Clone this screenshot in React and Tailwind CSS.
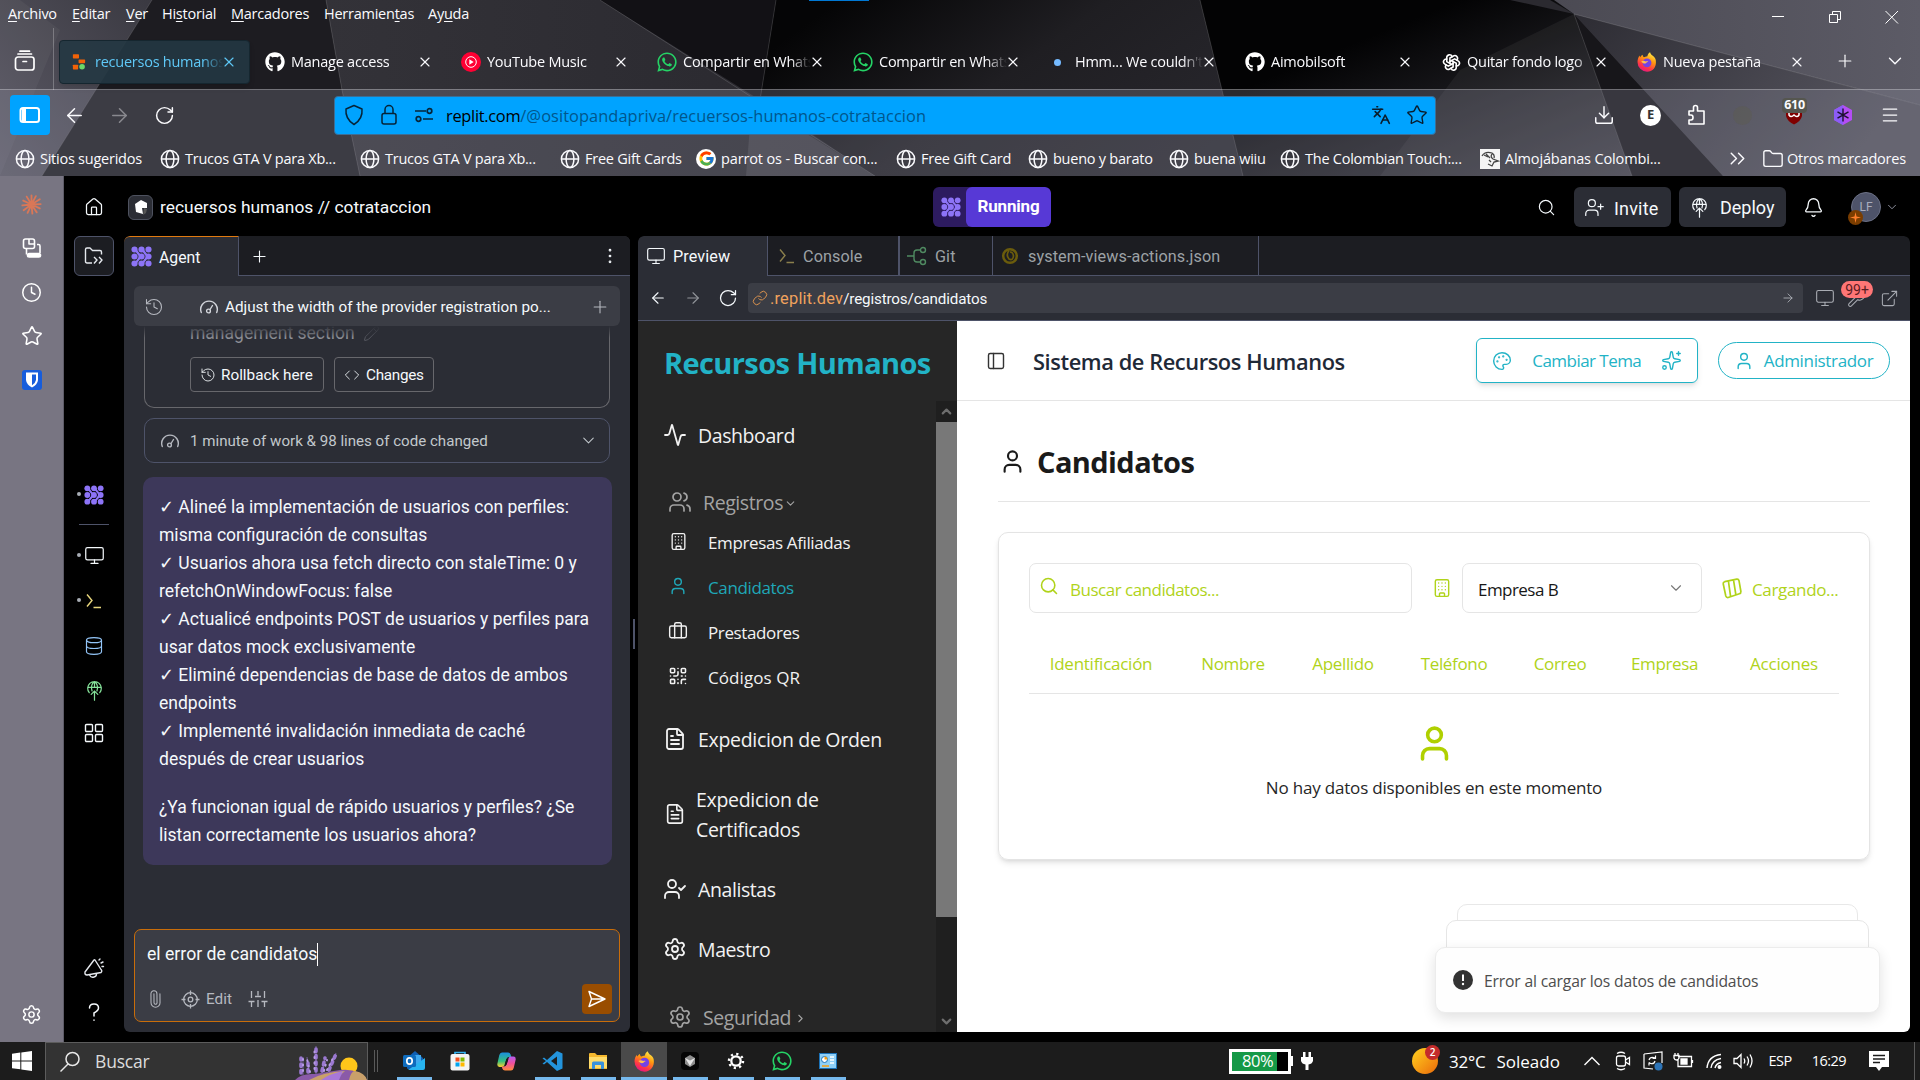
import React from "react";
import {
  Activity, ArrowLeft, ArrowRight, Bell, Briefcase, Building, ChevronDown, ChevronRight, ChevronUp,
  ChevronsRight, Clock, Code, Database, Download, EllipsisVertical, ExternalLink, FileText, Folder,
  History, House, Languages, Link, Menu, Monitor, Palette, PanelLeft, Paperclip, Pencil, Plus, QrCode,
  RotateCw, Search, Settings, Sparkles, Star, User, UserCheck, UserPlus, Users, Wrench, X,
} from "lucide-react";
import { FaGithub, FaWhatsapp } from "react-icons/fa";
import { FcGoogle } from "react-icons/fc";
import { TbBrandOpenai } from "react-icons/tb";

const segoe = "font-['Open_Sans','Noto_Sans',sans-serif]";
const plex = "font-['Roboto','Noto_Sans',sans-serif]";

/* ---------- small drawings ---------- */

function ThemeBackdrop() {
  return (
    <svg className="absolute inset-0" width="1920" height="176" viewBox="0 0 1920 176" preserveAspectRatio="none">
      <defs>
        <linearGradient id="tl" x1="0" y1="1" x2="1" y2="0"><stop offset="0" stopColor="#5d5b67" /><stop offset="1" stopColor="#3a3941" /></linearGradient>
        <linearGradient id="tm" x1="0" y1="0" x2="1" y2="0"><stop offset="0" stopColor="#333238" /><stop offset="1" stopColor="#29282e" /></linearGradient>
        <linearGradient id="tc" x1="0" y1="0.2" x2="1" y2="0.7"><stop offset="0.05" stopColor="#050506" /><stop offset="0.5" stopColor="#1f1e22" /><stop offset="1" stopColor="#28272d" /></linearGradient>
        <linearGradient id="tr" x1="0" y1="0" x2="1" y2="1"><stop offset="0.3" stopColor="#030304" /><stop offset="1" stopColor="#3a3941" /></linearGradient>
        <linearGradient id="te" x1="0" y1="0" x2="1" y2="0"><stop offset="0" stopColor="#4b4a53" /><stop offset="1" stopColor="#5c5b66" /></linearGradient>
        <linearGradient id="tw" x1="0" y1="0" x2="1" y2="0.4"><stop offset="0" stopColor="#2d2c33" /><stop offset="1" stopColor="#56555f" /></linearGradient>
      </defs>
      <rect width="1920" height="176" fill="#2b2a30" />
      <path d="M0 0H152L42 176H0Z" fill="url(#tl)" />
      <path d="M0 176L60 30L20 0H0Z" fill="#ffffff" opacity=".04" />
      <path d="M152 0H326L342 90L360 176H42Z" fill="#1d1c21" />
      <path d="M326 0H600L875 176H360L342 90Z" fill="url(#tm)" />
      <path d="M600 0H776L760 100Z" fill="#121115" />
      <path d="M776 0H1200L1243 176H875L760 100Z" fill="url(#tc)" />
      <path d="M1200 0H1574V14L1632 176H1243Z" fill="url(#tr)" />
      <path d="M1510 0H1550L1574 14Z" fill="#2b2a30" />
      <path d="M1574 14L1460 70L1380 176H1632Z" fill="#ffffff" opacity=".05" />
      <path d="M1574 14L1632 176H1723Z" fill="#17161a" />
      <path d="M1574 14L1723 176H1920V105Z" fill="url(#tw)" />
      <path d="M1554 0H1920V105L1574 14Z" fill="url(#te)" />
      <path d="M752 100L746 176H875Z" fill="#ffffff" opacity=".1" />
      <g stroke="#ffffff" strokeOpacity=".14" fill="none">
        <path d="M152 0L42 176M326 0L342 90L360 176M600 0L875 176M1200 0L1243 176M1574 14L1632 176M1574 14L1920 105M776 0L760 100" />
      </g>
      <rect y="89" width="1920" height="87" fill="#918ea2" opacity=".28" />
      <rect y="89" width="1920" height="1" fill="#ffffff" opacity=".28" />
    </svg>
  );
}

function Globe() {
  return (
    <svg width="20" height="20" viewBox="0 0 20 20" fill="none" stroke="#fbfbfe" strokeWidth="1.5" className="shrink-0">
      <circle cx="10" cy="10" r="8.6" /><ellipse cx="10" cy="10" rx="3.9" ry="8.6" /><path d="M1.4 10h17.2" />
    </svg>
  );
}

function AgentLogo({ size = 20 }) {
  const pts = [4, 12, 20];
  return (
    <svg width={size} height={size * 1.1} viewBox="0 -0.5 24 25" className="shrink-0">
      <g fill="#8d74f7">
        {pts.map((x) => pts.map((y) => <ellipse key={x + "-" + y} cx={x} cy={y} rx="3.500" ry="3.500" />))}
      </g>
      <g fill="none" stroke="#8d74f7" strokeWidth="2.600">
        <path d="M4 4C8 6 7 9 12 12C7 15 8 18 4 20" /><path d="M12 4C16 6 15 9 20 12C15 15 16 18 12 20" />
      </g>
    </svg>
  );
}

function Firefox({ size = 20 }) {
  return (
    <svg width={size} height={size} viewBox="0 0 24 24" className="shrink-0">
      <defs>
        <linearGradient id="ffx" x1="0.8" y1="0" x2="0.3" y2="1"><stop offset="0" stopColor="#fff44f" /><stop offset=".4" stopColor="#ff980e" /><stop offset=".75" stopColor="#ff3647" /><stop offset="1" stopColor="#e31587" /></linearGradient>
      </defs>
      <path d="M22.5 9.5C22 7 20 5.200 18.500 4.300C17.500 3.500 16 1.800 15.700 0.200C13.500 1.300 12.600 3.500 12.500 5C10.800 5.100 9.300 5.700 8.400 6.300C7.300 5.800 6.800 4.500 6.800 3.300C5.300 4 4.300 5.500 3.700 6.400C3.300 5.600 3.300 4.800 3.300 4.200C1.500 6 .6 9.300.6 12A11.500 11.500 0 0 0 12.100 23.600C18.500 23.600 23.900 18.400 22.500 9.500Z" fill="url(#ffx)" />
      <circle cx="12" cy="13" r="5.300" fill="#7542e5" />
      <path d="M5 11.500C7 10 9 10.500 10.500 11.500C12 10.800 13 11 13.500 11.600C12 12 11 13 10.200 13.800C8.600 14.200 7 13.800 5 11.500Z" fill="#ffbd4f" />
    </svg>
  );
}

function ReplitMark() {
  return (
    <svg width="14" height="16" viewBox="0 0 16 18" className="shrink-0">
      <rect x="1" y="0" width="7" height="5" rx=".8" fill="#f26207" /><rect x="7.500" y="6" width="7.500" height="4.500" rx=".8" fill="#f26207" /><rect x="1" y="12" width="6" height="5.500" rx=".8" fill="#f26207" /><circle cx="11.500" cy="14.500" r="3.200" fill="#6bd968" />
    </svg>
  );
}

function YoutubeMusic() {
  return (
    <svg width="20" height="20" viewBox="0 0 20 20" className="shrink-0">
      <circle cx="10" cy="10" r="10" fill="#ff0033" /><circle cx="10" cy="10" r="5.300" fill="none" stroke="#fff" /><path d="M8.300 7.300L12.700 10L8.300 12.700Z" fill="#fff" />
    </svg>
  );
}

function DeployIcon({ color, size = 21 }) {
  return (
    <svg width={size} height={size} viewBox="0 0 24 24" fill="none" stroke={color} strokeWidth="1.400" strokeLinecap="round" className="shrink-0">
      <path d="M6 14.500A7.800 7.800 0 1 1 18 14.500M9.200 12.500C7.500 8 9.300 3 12 1.800C14.700 3 16.500 8 14.800 12.500M4.500 8.500H19.500M12 1.800V8.500M12 13V23M8.200 16.500L12 12.700L15.800 16.500" />
    </svg>
  );
}

function ConsoleIcon({ color }) {
  return (
    <svg width="18" height="18" viewBox="0 0 18 18" fill="none" stroke={color} strokeWidth="1.400" className="shrink-0">
      <path d="M2 2.500L7 8.500L2 14.500M8.500 15.500H16" />
    </svg>
  );
}

function GaugeIcon({ color }) {
  return (
    <svg width="20" height="18" viewBox="0 0 20 18" fill="none" stroke={color} strokeWidth="1.400" strokeLinecap="round" className="shrink-0">
      <path d="M2.300 14.500A8.300 8.300 0 1 1 17.700 14.500" /><circle cx="9.500" cy="13" r="1.900" /><path d="M11 11.500L13.500 7.500" />
    </svg>
  );
}

function TicketIcon() {
  return (
    <svg width="20" height="21" viewBox="0 0 20 21" fill="none" stroke="#b0d31a" strokeWidth="1.700" strokeLinejoin="round" strokeLinecap="round" className="shrink-0">
      <path d="M1.200 5.800Q1 4.200 2.700 3.700L14.800 1.200Q16.600 1 17 2.700L18.900 13.500Q19 15.300 17.400 15.800L6.200 19.500Q4.400 19.800 3.800 18ZM6.400 3L8.600 18.700M11.500 1.900L13.900 17" />
    </svg>
  );
}

function Starburst() {
  return (
    <svg width="21" height="21" viewBox="0 0 24 24" stroke="#d97757" strokeWidth="2.100" strokeLinecap="round">
      <path d="M12 12L12 1.500M12 12L17 2.500M12 12L21.500 6M12 12L22.500 11.500M12 12L21.500 16.500M12 12L18 21M12 12L13 22.500M12 12L7.500 21.500M12 12L3 18.500M12 12L1.500 13M12 12L2.500 7.500M12 12L6.500 3" />
    </svg>
  );
}

function SyncedTabs() {
  return (
    <svg width="22" height="22" viewBox="0 0 22 22" fill="none" stroke="#fff" strokeWidth="1.600" strokeLinejoin="round">
      <rect x="2.500" y="2" width="11" height="9.500" rx="2" /><path d="M8 2v5H13.500M5.500 11.500V17.500M16 7.500H17.500Q19 7.500 19 9V16" /><rect x="6.500" y="16.500" width="13" height="3.500" rx="1.700" fill="#fff" />
    </svg>
  );
}

/* ---------- browser chrome ---------- */

const menus = [
  ["A", "rchivo", "", "w-[64px]"], ["E", "ditar", "", "w-[54px]"], ["V", "er", "", "w-[36px]"], ["s", "torial", "Hi", "w-[69px]"],
  ["M", "arcadores", "", "w-[93px]"], ["t", "as", "Herramien", "w-[104px]"], ["u", "da", "Ay", "w-[60px]"],
];

const tabs = [
  { icon: <ReplitMark />, label: "recuersos humanos", active: true },
  { icon: <FaGithub size={20} color="#fff" />, label: "Manage access" },
  { icon: <YoutubeMusic />, label: "YouTube Music" },
  { icon: <FaWhatsapp size={22} color="#25d366" />, label: "Compartir en WhatsApp" },
  { icon: <FaWhatsapp size={22} color="#25d366" />, label: "Compartir en WhatsApp" },
  { icon: <span className="mr-1 size-[7px] rounded-full bg-[#75baff]" />, label: "Hmm... We couldn't" },
  { icon: <FaGithub size={20} color="#fff" />, label: "Aimobilsoft" },
  { icon: <TbBrandOpenai size={19} color="#fff" />, label: "Quitar fondo logo" },
  { icon: <Firefox />, label: "Nueva pestaña" },
];

const bookmarks = [
  ["Sitios sugeridos", "w-[145px]"], ["Trucos GTA V para Xb...", "w-[200px]"], ["Trucos GTA V para Xb...", "w-[200px]"],
  ["Free Gift Cards", "w-[136px]"], ["parrot os - Buscar con...", "w-[200px] tracking-[-0.010em]", "google"], ["Free Gift Card", "w-[132px]"],
  ["bueno y barato", "w-[141px]"], ["buena wiiu", "w-[111px]"], ["The Colombian Touch:...", "w-[200px]"],
  ["Almojábanas Colombi...", "w-[247px] tracking-[-0.010em]", "photo"],
];

function BookmarkIcon({ kind }) {
  if (kind === "google") return <span className="grid size-5 shrink-0 place-items-center rounded-full bg-white"><FcGoogle size={17} /></span>;
  if (kind === "photo")
    return (
      <svg width="20" height="20" viewBox="0 0 20 20" className="shrink-0"><rect width="20" height="20" fill="#f4f4f4" /><path d="M2 7Q5 2 12 4Q15 6 14 9M6 5L10 9M4 6L8 8M12 5Q10 8 13 10L18 12L14 13L12 17L8 15M9 11L11 13" fill="none" stroke="#444" strokeWidth="1.300" /></svg>
    );
  return <Globe />;
}

function BrowserChrome() {
  return (
    <header className={`relative h-[176px] shrink-0 overflow-hidden text-[14.5px] tracking-[-0.017em] text-[#fbfbfe] ${segoe}`}>
      <ThemeBackdrop />
      <div className="absolute left-[809px] top-0 h-px w-[60px] bg-[#0078d4]" />
      <div className="relative flex h-7 items-center pl-2">
        {menus.map(([key, after, before, w]) => (
          <span key={after} className={`shrink-0 ${w}`}>{before}<span className="underline underline-offset-2">{key}</span>{after}</span>
        ))}
        <div className="ml-auto flex h-full items-center gap-[37px] pr-[18px] pt-1.5">
          <svg width="20" height="20" viewBox="0 0 20 20" stroke="#fff"><path d="M4 9.500H16" /></svg>
          <svg width="20" height="20" viewBox="0 0 20 20" stroke="#fff" fill="none"><path d="M4.500 7.500H12.500V15.500H4.500ZM7.500 7V4.500H15.500V12.500H13" /></svg>
          <svg width="20" height="20" viewBox="0 0 20 20" stroke="#fff"><path d="M3.500 4L16 16.500M16 4L3.500 16.500" /></svg>
        </div>
      </div>
      <div className="relative flex h-[62px] items-center">
        <div className="flex h-full w-[54px] items-center border-r border-white/25 pl-[14px] pt-1">
          <svg width="22" height="22" viewBox="0 0 22 22" fill="none" stroke="#fff" strokeWidth="1.700" strokeLinecap="round"><rect x="1.500" y="7" width="18.500" height="13" rx="2.500" /><path d="M4 4H17.500M6 1.200H15.500M9 11.500H12.500" /></svg>
        </div>
        <div className="flex h-full items-center pl-[3px] pt-[6px]">
          {tabs.map((t, i) => (
            <div key={i} className="w-[196px] shrink-0 pl-0.5 pr-[3px]">
              <div className={`flex h-[44px] items-center rounded ${t.active ? "border border-[#15262f] bg-[#233742]/90 text-[#5fc9f8] shadow-md" : "border border-transparent"}`}>
                <span className="ml-[8px] grid w-[22px] shrink-0 place-items-center">{t.icon}</span>
                <span className="ml-[5px] w-[128px] overflow-hidden whitespace-nowrap [mask-image:linear-gradient(to_right,black_84%,transparent_100%)]">{t.label}</span>
                <X size={16} strokeWidth={1.7} className="-ml-[2px] shrink-0" />
              </div>
            </div>
          ))}
        </div>
        <Plus size={20} strokeWidth={1.4} className="ml-[14px] mt-[3px]" />
        <ChevronDown size={22} strokeWidth={1.500} className="ml-[29px] mt-[3px]" />
      </div>
      <div className="relative flex h-[50px] items-center">
        <div className="ml-[10px] grid h-10 w-10 place-items-center rounded bg-[#00a3ff]">
          <svg width="22" height="18" viewBox="0 0 22 18" fill="none" stroke="#fff" strokeWidth="2"><rect x="1.500" y="2" width="18.500" height="14" rx="2.500" /><path d="M5 2V16" strokeWidth="4" /></svg>
        </div>
        <ArrowLeft size={23} strokeWidth={1.600} className="ml-[13px]" />
        <ArrowRight size={23} strokeWidth={1.600} className="ml-[22px] opacity-40" />
        <RotateCw size={21} strokeWidth={1.700} className="ml-[23px]" />
        <div className="ml-[159px] flex h-[39px] w-[1102px] items-center rounded border border-[#3c6e96] bg-[#00a3ff] text-[#0a1c2c]">
          <svg width="20" height="22" viewBox="0 0 20 22" fill="none" stroke="#062438" strokeWidth="1.500" className="ml-[9px]"><path d="M10 1.500L18 5Q19 15 10 20.500Q1 15 2 5Z" strokeLinejoin="round" /></svg>
          <svg width="18" height="22" viewBox="0 0 18 22" fill="none" stroke="#062438" strokeWidth="1.500" className="ml-[16px]"><rect x="2" y="9.500" width="14" height="10.500" rx="2" /><path d="M5 9.500V5.500A4 4 0 0 1 13 5.500V9.500" /></svg>
          <svg width="20" height="18" viewBox="0 0 20 18" fill="none" stroke="#062438" strokeWidth="1.700" className="ml-[16px]"><path d="M1 5H12M9 13H19" /><circle cx="15.500" cy="5" r="2.300" /><circle cx="4.500" cy="13" r="2.300" /></svg>
          <span className="ml-[12px] whitespace-nowrap pt-[3px] text-[16.4px] tracking-[0.004em] text-[#00568c]"><span className="tracking-[-0.018em] text-black">replit.com</span>/@ositopandapriva/recuersos-humanos-cotrataccion</span>
          <Languages size={20} strokeWidth={1.900} className="ml-auto" />
          <Star size={22} strokeWidth={1.500} className="ml-[15px] mr-[7px]" />
        </div>
        <Download size={22} strokeWidth={1.600} className="ml-[157px]" />
        <span className="ml-[25px] grid size-[21px] place-items-center rounded-full bg-white text-[13px] font-bold text-[#333]">E</span>
        <svg width="22" height="24" viewBox="0 0 22 24" fill="none" stroke="#fff" strokeWidth="1.600" strokeLinejoin="round" className="ml-[24px]"><path d="M4 8H8.500V4.500Q8.500 2.500 10.500 2.500Q12.500 2.500 12.500 4.500V8H19V21H4V17H6Q8 17 8 14.500Q8 12 6 12H4Z" /></svg>
        <span className="ml-[26px] size-[19px] rounded-full bg-[#5b5c52]/50" />
        <span className="relative ml-[31px] grid h-full w-[22px] place-items-center">
          <svg width="18" height="20" viewBox="0 0 18 20"><path d="M1 1H17V11Q16 16 9 19.500Q2 16 1 11Z" fill="#800000" /><path d="M4 7V10Q6 13 9 10Q12 13 14 10V7" stroke="#fff" strokeWidth="1.500" fill="none" /></svg>
          <span className="absolute -left-[1px] top-[8px] h-[15px] w-[25px] rounded-sm bg-[#55564f] text-center text-[12.5px] font-bold leading-[14px]">610</span>
        </span>
        <svg width="22" height="22" viewBox="0 0 22 22" className="ml-[27px]"><path d="M11 1L20 6V16L11 21L2 16V6Z" fill="#b44df5" /><path d="M11 1L2 6V16L11 21Z" fill="#8c5cf7" /><path d="M11 4.500V17.500M5.500 7.800L16.500 14.200M16.500 7.800L5.500 14.200" stroke="#1c1030" strokeWidth="1.400" /></svg>
        <Menu size={20} strokeWidth={1.500} className="ml-[26px]" />
      </div>
      <div className="relative flex h-9 items-center pl-[15px] pt-[1px]">
        {bookmarks.map(([label, w, kind], i) => (
          <div key={i} className={`flex shrink-0 items-center gap-[5px] whitespace-nowrap ${w}`}><BookmarkIcon kind={kind} />{label}</div>
        ))}
        <ChevronsRight size={25} strokeWidth={1.400} className="-ml-[2px]" />
        <Folder size={22} strokeWidth={1.500} className="ml-[12px] mr-[3px] shrink-0" />
        <span className="whitespace-nowrap">Otros marcadores</span>
      </div>
    </header>
  );
}

function FirefoxSidebar() {
  return (
    <aside className="flex w-16 shrink-0 flex-col items-center border-r border-[#5e5c68] bg-[#787582] pt-[6px] text-white">
      <span className="grid h-11 place-items-center"><Starburst /></span>
      <span className="grid h-11 place-items-center"><SyncedTabs /></span>
      <span className="grid h-11 place-items-center"><Clock size={21} strokeWidth={1.700} /></span>
      <span className="grid h-11 place-items-center"><Star size={22} strokeWidth={1.700} /></span>
      <span className="grid h-11 place-items-center">
        <svg width="20" height="20" viewBox="0 0 20 20"><rect width="20" height="20" rx="3" fill="#175ddc" /><path d="M4 2.500H16V10Q15.500 14.500 10 17.500Q4.500 14.500 4 10Z" fill="#fff" /><path d="M10 4.500H14V10Q13.500 13 10 15.200Z" fill="#175ddc" /></svg>
      </span>
      <Settings size={21} strokeWidth={1.700} className="mb-[17px] mt-auto" />
    </aside>
  );
}

/* ---------- replit workspace ---------- */

function WorkspaceHeader() {
  return (
    <div className="flex h-[60px] shrink-0 items-center pt-[2px] text-[#f5f9fc]">
      <House size={20} strokeWidth={1.500} className="ml-[20px]" />
      <span className="ml-[24px] grid size-[25px] place-items-center rounded-md border border-[#4e525f] bg-[#2b2d35]">
        <svg width="14" height="17" viewBox="0 0 14 17"><path d="M7 1L13 4V9L8 9L9 15L2 13L1 5Z" fill="#fff" /><path d="M10 9L13 10L12 14L9 16Z" fill="#555" /></svg>
      </span>
      <span className="ml-[7px] w-[290px] whitespace-nowrap pt-[1px] text-[17.4px]">recuersos humanos // cotrataccion</span>
      <div className="ml-[483px] flex h-10 w-[118px] overflow-hidden rounded-md bg-[#2d1b60]">
        <span className="grid w-[33px] place-items-center pl-[2px]"><AgentLogo size={20} /></span>
        <span className="grid flex-1 place-items-center rounded-md bg-[#5739d6] text-[17px] font-bold tracking-[-0.01em] text-white">Running</span>
      </div>
      <Search size={19} strokeWidth={1.500} className="ml-[486px]" />
      <button className="ml-[18px] flex h-10 w-[97px] items-center rounded-md bg-[#2b2d35] pl-[10px] text-[18px] tracking-[0.01em]"><UserPlus size={21} strokeWidth={1.400} className="mr-[9px]" /><span className="pt-[2px]">Invite</span></button>
      <button className="ml-2 flex h-10 w-[107px] items-center rounded-md bg-[#2b2d35] pl-[10px] text-[18px]"><DeployIcon color="#f5f9fc" /><span className="ml-[10px] pt-[1px]">Deploy</span></button>
      <Bell size={21} strokeWidth={1.500} className="ml-[17px]" />
      <span className="relative ml-[27px] grid size-[30px] place-items-center rounded-full border border-[#6b7085] bg-[#4e5369] text-[12px] text-[#a9adbd]">LF
        <span className="absolute -left-[4px] top-[17px] grid size-[15px] place-items-center rounded-full bg-[#7a3d00]">
          <svg width="11" height="11" viewBox="0 0 11 11"><path d="M5.500 0L6.500 4.500L11 5.500L6.500 6.500L5.500 11L4.500 6.500L0 5.500L4.500 4.500Z" fill="#ff7f2a" /></svg>
        </span>
      </span>
      <ChevronDown size={14} strokeWidth={1.400} className="ml-[4px] text-[#a9adbd]" />
    </div>
  );
}

function Dotted({ dot, children }) {
  return (
    <span className="relative grid h-[45px] w-full shrink-0 place-items-center">
      {dot && <i className="absolute left-[13px] top-[20px] size-1 rounded-full bg-[#a8adb5]" />}
      {children}
    </span>
  );
}

function Rail() {
  return (
    <nav className="flex w-[60px] shrink-0 flex-col items-center pb-2 text-[#f5f9fc]">
      <span className="grid h-10 w-10 shrink-0 place-items-center rounded-md border border-[#4e5369] bg-[#1c1d22]">
        <svg width="20" height="20" viewBox="0 0 20 20" fill="none" stroke="#e6e9ee" strokeWidth="1.400" strokeLinejoin="round"><path d="M8 17H3Q1.500 17 1.500 15.500V3.500Q1.500 2 3 2H6L8.500 4.500H16Q17.500 4.500 17.500 6V8.500M10 11L13 14L10 17.500M15 11L18 14L15 17.500" /></svg>
      </span>
      <div className="mt-[196px] w-full"><Dotted dot><AgentLogo size={20} /></Dotted></div>
      <div className="mt-[7px] h-px w-[30px] bg-[#4e5369]" />
      <div className="mt-[8px] w-full">
        <Dotted dot><Monitor size={21} strokeWidth={1.400} /></Dotted>
        <Dotted dot><ConsoleIcon color="#e8d67c" /></Dotted>
        <Dotted><Database size={20} strokeWidth={1.400} color="#93c5f7" /></Dotted>
        <Dotted><DeployIcon color="#86e39b" /></Dotted>
        <span className="grid h-[40px] w-full place-items-center">
          <svg width="20" height="20" viewBox="0 0 20 20" fill="none" stroke="#f5f9fc" strokeWidth="1.400"><rect x="1.500" y="1.500" width="7" height="7" rx="1" /><rect x="11.500" y="1.500" width="7" height="7" rx="1" /><rect x="1.500" y="11.500" width="7" height="7" rx="1" /><rect x="11.500" y="11.500" width="7" height="7" rx="1" /></svg>
        </span>
      </div>
      <div className="mt-auto grid h-11 place-items-center">
        <svg width="22" height="22" viewBox="0 0 22 22" fill="none" stroke="#e6e9ee" strokeWidth="1.400" strokeLinejoin="round" strokeLinecap="round"><path d="M11 3L2 15Q1.500 18 4 18L18 15.500Q19.500 14 18 12.500L12 3Q11.500 2.500 11 3ZM6.500 18Q8 21 11 20Q13.500 19.500 13.500 17M16 3L17 2M18 6L20 5M19 9.500H20.500" /></svg>
      </div>
      <div className="grid h-11 place-items-center">
        <svg width="16" height="22" viewBox="0 0 16 22" fill="none" stroke="#f5f9fc" strokeWidth="1.500" strokeLinecap="round"><path d="M3.500 7Q3.500 3 8 3Q12.500 3 12.500 7Q12.500 9.500 8 12V15M8 19V19.300" /></svg>
      </div>
    </nav>
  );
}

function ChatPanel() {
  const items = [
    ["✓ Alineé la implementación de usuarios con perfiles:", "misma configuración de consultas"],
    ["✓ Usuarios ahora usa fetch directo con staleTime: 0 y", "refetchOnWindowFocus: false"],
    ["✓ Actualicé endpoints POST de usuarios y perfiles para", "usar datos mock exclusivamente"],
    ["✓ Eliminé dependencias de base de datos de ambos", "endpoints"],
    ["✓ Implementé invalidación inmediata de caché", "después de crear usuarios"],
  ];
  return (
    <section className="flex h-[796px] w-[506px] shrink-0 flex-col overflow-hidden rounded-md bg-[#2b2d35] text-[#f5f9fc]">
      <div className="flex h-10 shrink-0">
        <div className="flex w-[115px] items-center rounded-tl-md border-r border-t border-r-[#4e5369] border-t-[#e07a10] pl-[7px] text-[15.8px]"><AgentLogo size={21} /><span className="ml-[7px] pt-[3px]">Agent</span></div>
        <div className="flex flex-1 items-center border-b border-[#4e5369] bg-[#1c1d22] pl-[11px] pr-[10px] pt-[1px]">
          <Plus size={19} strokeWidth={1.400} /><EllipsisVertical size={20} strokeWidth={1.300} className="ml-auto" />
        </div>
      </div>
      <div className="relative z-10 mx-[10px] mt-[10px] flex h-10 shrink-0 items-center rounded-md bg-[#3b3d45] px-[10px] pt-[1px]">
        <History size={20} strokeWidth={1.300} className="text-[#b6b9c0]" />
        <span className="ml-[35px]"><GaugeIcon color="#d3d6dc" /></span>
        <span className="ml-[6px] whitespace-nowrap pt-[1px] text-[15.25px]">Adjust the width of the provider registration po...</span>
        <Plus size={20} strokeWidth={1.300} className="ml-auto text-[#b6b9c0]" />
      </div>
      <div className="relative mx-5 h-[82px] shrink-0 rounded-b-[10px] border border-t-0 border-[#67676c] pl-[45px]">
        <div className="-mt-[7px] flex h-7 items-center text-[17.5px] text-[#8e9097]">management section<Pencil size={17} strokeWidth={1.200} className="ml-[8px] text-[#5b5d65]" /></div>
        <div className="absolute -inset-x-px top-0 h-3 bg-gradient-to-b from-[#2b2d35] to-transparent" />
        <div className="mt-[10px] flex gap-[10px] text-[15.3px]">
          <span className="flex h-[35px] w-[134px] items-center rounded border border-[#67676c] pl-[9px] pt-[1px]"><History size={16} strokeWidth={1.300} className="mr-[5px]" />Rollback here</span>
          <span className="flex h-[35px] w-[100px] items-center rounded border border-[#67676c] pl-[9px] pt-[1px] tracking-[-0.02em]"><Code size={16} strokeWidth={1.300} className="mr-[6px]" />Changes</span>
        </div>
      </div>
      <div className="mx-5 mt-[10px] flex h-[45px] shrink-0 items-center rounded-[10px] border border-[#4e5369] pl-[15px] pr-[11px] text-[15.100px] text-[#c2c8cc]">
        <GaugeIcon color="#b6b9c0" /><span className="ml-[10px] pt-[1px]">1 minute of work &amp; 98 lines of code changed</span><ChevronDown size={19} strokeWidth={1.300} className="ml-auto" />
      </div>
      <div className="ml-[19px] mt-[14px] h-[388px] w-[469px] shrink-0 whitespace-nowrap rounded-[10px] bg-[#3d385a] pl-4 pt-4 text-[17.55px] leading-[28px]">
        {items.map(([a, b]) => <p key={a}>{a}<br />{b}</p>)}
        <p className="mt-5">¿Ya funcionan igual de rápido usuarios y perfiles? ¿Se<br />listan correctamente los usuarios ahora?</p>
      </div>
      <div className="mx-[10px] mb-[10px] mt-auto flex h-[93px] shrink-0 flex-col rounded-[7px] border border-[#c96d0a] bg-[#3b3d45]">
        <div className="flex h-[47px] items-center pl-[12px] pt-[1px] text-[17.65px]">el error de candidatos<span className="h-[23px] w-px bg-white" /></div>
        <div className="flex h-11 items-center pl-[11px] pr-[7px] text-[15.300px] text-[#b6b9c0]">
          <Paperclip size={18} strokeWidth={1.400} className="-rotate-45" />
          <svg width="19" height="19" viewBox="0 0 19 19" fill="none" stroke="currentColor" strokeWidth="1.300" className="ml-[17px] mr-[6px]"><circle cx="9.500" cy="9.500" r="6.800" /><circle cx="9.500" cy="9.500" r="2.300" /><path d="M9.500 .5V5M9.500 14V18.500M.5 9.500H4.500M14.500 9.500H18.500" /></svg>
          Edit
          <svg width="20" height="18" viewBox="0 0 20 18" fill="none" stroke="currentColor" strokeWidth="1.300" className="ml-[16px]"><path d="M3.500 1V8M3.500 11.500V17M.5 11.500H6.500M10 1V5.500M7 6.500H13M10 10V17M16.500 1V8M16.500 11.500V17M13.500 11.500H19.500" /></svg>
          <span className="ml-auto grid size-[30px] place-items-center rounded bg-[#994d00]">
            <svg width="18" height="18" viewBox="0 0 18 18" fill="none" stroke="#fff" strokeWidth="1.400" strokeLinejoin="round"><path d="M1 1.500L17 9L1 16.500L3.500 9ZM3.500 9H17" /></svg>
          </span>
        </div>
      </div>
    </section>
  );
}

function PreviewTabs() {
  return (
    <div className="flex h-10 shrink-0 overflow-hidden rounded-t-md bg-[#1c1d22] text-[16.200px] tracking-[0.006em] text-[#9da2a6]">
      <div className="flex w-[130px] items-center border-r border-[#4e5369] bg-[#2b2d35] pl-[8px] text-[#f5f9fc]"><Monitor size={20} strokeWidth={1.400} className="mr-[7px]" /><span className="pt-[3px]">Preview</span></div>
      <div className="flex w-[132px] items-center border-b border-r-2 border-[#4e5369] pl-[10px]"><ConsoleIcon color="#8a7f4c" /><span className="ml-[7px] pt-[4px]">Console</span></div>
      <div className="flex w-[93px] items-center border-b border-r border-[#4e5369] pl-[7px]">
        <svg width="20" height="20" viewBox="0 0 20 20" fill="none" stroke="#4f8a61" strokeWidth="1.400" className="mr-[8px]"><path d="M0 10H7M13.500 4H10Q7 4 7 7V13Q7 16 10 16H13.500" /><circle cx="16" cy="4" r="2.500" /><circle cx="16" cy="16" r="2.500" /></svg><span className="pt-[4px]">Git</span>
      </div>
      <div className="flex w-[266px] items-center border-b border-r border-[#4e5369] pl-[8px]">
        <svg width="18" height="18" viewBox="0 0 18 18" fill="none" stroke="#6b5c0c" strokeWidth="2.500" className="mr-[9px]"><circle cx="9" cy="9" r="6.800" /><path d="M8 3.500Q4.500 8 8 12Q12 14 12.500 9Q12 5 9 5" strokeWidth="1.700" /></svg>
        <span className="pt-[4px]">system-views-actions.json</span>
      </div>
      <div className="flex-1 border-b border-[#4e5369]" />
    </div>
  );
}

function PreviewToolbar() {
  return (
    <div className="flex h-[45px] shrink-0 items-center border-b border-[#4e5369] bg-[#2b2d35] text-[#f5f9fc]">
      <ArrowLeft size={18} strokeWidth={1.500} className="ml-[11px]" />
      <ArrowRight size={18} strokeWidth={1.500} className="ml-[17px] opacity-50" />
      <RotateCw size={20} strokeWidth={1.500} className="ml-[16px]" />
      <div className="ml-[10px] flex h-[30px] flex-1 items-center rounded bg-[#3b3d45] pl-[4px] pr-[8px]">
        <Link size={16} strokeWidth={1.500} color="#d9924f" />
        <span className="ml-[2px] pt-[2px] text-[16.400px] tracking-[0.012em] text-[#f0a25d]">.replit.dev</span><span className="pt-[2px] text-[15.200px] tracking-[-0.01em]">/registros/candidatos</span>
        <ArrowRight size={14} strokeWidth={1.400} className="ml-auto text-[#b6b9c0]" />
      </div>
      <Monitor size={20} strokeWidth={1.300} className="ml-[12px] text-[#a9acb3]" />
      <span className="relative ml-[12px]"><Wrench size={19} strokeWidth={1.300} className="text-[#a9acb3]" />
        <span className="absolute -left-[6px] -top-[8px] h-[17px] w-8 rounded-full bg-[#ff7676] text-center text-[14px] leading-[18px] text-[#5a1c22]">99+</span>
      </span>
      <ExternalLink size={19} strokeWidth={1.300} className="ml-[14px] mr-[11px] text-[#a9acb3]" />
    </div>
  );
}

/* ---------- previewed application ---------- */

function SubItem({ icon, children, className }) {
  return <div className={`flex items-center pl-[30px] text-[17px] tracking-[-0.022em] ${className}`}><span className="mr-[20px] grid w-5 place-items-center pb-1">{icon}</span>{children}</div>;
}
function Item({ icon, children, className }) {
  return <div className={`flex items-center pl-[25px] text-[19.500px] tracking-[-0.021em] ${className}`}><span className="mr-[11px] grid w-6 place-items-center pb-0.5">{icon}</span>{children}</div>;
}

function AppSidebar() {
  return (
    <aside className="flex w-[319px] shrink-0 flex-col bg-[#262626] text-[#f2f2f2]">
      <div className="flex h-20 shrink-0 items-center whitespace-nowrap pl-[26px] pt-[3px] text-[29px] font-bold tracking-[-0.021em] text-[#22b3c6]">Recursos Humanos</div>
      <div className="flex min-h-0 flex-1">
        <div className="flex-1 overflow-hidden">
          <Item className="h-[69px]" icon={<Activity size={24} strokeWidth={1.800} />}>Dashboard</Item>
          <Item className="mt-[12px] h-[42px] !pl-[30px] text-[#a3a3a3]" icon={<Users size={24} strokeWidth={1.700} />}>Registros<ChevronDown size={13} strokeWidth={2} className="ml-px" /></Item>
          <SubItem className="mt-[1px] h-9" icon={<Building size={19} strokeWidth={1.700} />}>Empresas Afiliadas</SubItem>
          <SubItem className="mt-[4px] h-[45px] text-[#1fa7b8]" icon={<User size={20} strokeWidth={1.700} />}>Candidatos</SubItem>
          <SubItem className="h-[45px]" icon={<Briefcase size={20} strokeWidth={1.700} />}>Prestadores</SubItem>
          <SubItem className="h-[45px] tracking-[0.005em]" icon={<QrCode size={20} strokeWidth={1.900} />}>Códigos QR</SubItem>
          <Item className="mt-[10px] h-[60px] !tracking-[-0.016em]" icon={<FileText size={24} strokeWidth={1.800} />}>Expedicion de Orden</Item>
          <Item className="mt-[15px] h-[60px] !tracking-[-0.016em] leading-[30px]" icon={<FileText size={22} strokeWidth={1.800} />}><span className="-ml-[2px]">Expedicion de<br />Certificados</span></Item>
          <Item className="mt-[15px] h-[60px]" icon={<UserCheck size={24} strokeWidth={1.800} />}>Analistas</Item>
          <Item className="h-[60px]" icon={<Settings size={24} strokeWidth={1.800} />}>Maestro</Item>
          <Item className="mt-[8px] h-[60px] !pl-[30px] text-[#a3a3a3]" icon={<Settings size={24} strokeWidth={1.700} />}>Seguridad<ChevronRight size={13} strokeWidth={2} className="ml-[3px]" /></Item>
        </div>
        <div className="flex w-[21px] flex-col items-center bg-[#1f1f1f] text-[#6e6e6e]">
          <span className="grid h-[21px] place-items-center"><ChevronUp size={15} strokeWidth={3.500} /></span>
          <span className="h-[495px] w-full bg-[#787878]" />
          <span className="mt-auto grid h-[21px] place-items-center"><ChevronDown size={15} strokeWidth={3.500} /></span>
        </div>
      </div>
    </aside>
  );
}

const columns = [
  ["Identificación", "w-[144px] tracking-[-0.015em]"], ["Nombre", "w-[120px]"], ["Apellido", "w-[100px]"], ["Teléfono", "w-[122px]"],
  ["Correo", "w-[90px]"], ["Empresa", "w-[119px]"], ["Acciones", "w-[114px] pl-[6px] tracking-[-0.012em]"],
];

function AppMain() {
  return (
    <main className="relative flex-1 overflow-hidden bg-white text-[17px] tracking-[-0.02em]">
      <div className="flex h-20 items-center border-b border-[#e5e5e5] text-[#22b3c6]">
        <PanelLeft size={20} strokeWidth={1.700} className="ml-[29px] text-[#333]" />
        <h1 className="ml-[27px] whitespace-nowrap pt-[3px] text-[21.800px] font-semibold tracking-[-0.019em] text-[#1f2937]">Sistema de Recursos Humanos</h1>
        <button className="ml-[131px] flex h-[45px] w-[222px] items-center rounded-md border border-[#22b3c6] pl-[15px] shadow-md"><Palette size={20} strokeWidth={1.700} /><span className="ml-[20px] mr-[19px] w-[110px] whitespace-nowrap pt-[1px] tracking-[-0.032em]">Cambiar Tema</span><Sparkles size={21} strokeWidth={1.600} /></button>
        <button className="ml-5 flex h-[37px] w-[172px] items-center rounded-full border border-[#22b3c6] pl-[15px]"><User size={20} strokeWidth={1.700} className="mr-[10px]" /><span className="pt-[1px]">Administrador</span></button>
      </div>
      <div className="pl-[41px] pr-[40px]">
        <div className="flex h-[101px] items-center border-b border-[#e5e5e5] pl-[1px] pt-[22px] text-[#1a1a1a]">
          <User size={27} strokeWidth={1.900} className="mb-[2px]" /><h2 className="ml-[11px] text-[29px] font-bold tracking-[-0.020em]">Candidatos</h2>
        </div>
        <div className="mt-[30px] h-[328px] rounded-[10px] border border-[#e4e4e4] px-[30px] pt-[30px] text-[#b0d31a] shadow-md">
          <div className="flex h-[50px] items-center">
            <div className="flex h-full w-[383px] items-center rounded-[7px] border border-[#e5e5e5] pl-[9px]"><Search size={20} strokeWidth={1.900} className="mb-1 mr-[11px]" /><span className="pt-[3px] tracking-[-0.029em]">Buscar candidatos...</span></div>
            <Building size={20} strokeWidth={1.700} className="ml-[20px]" />
            <div className="ml-[10px] flex h-full w-[240px] items-center rounded-[7px] border border-[#e5e5e5] pl-[15px] text-[#171717]"><span className="pt-[3px] tracking-[-0.032em]">Empresa B</span><ChevronDown size={18} strokeWidth={1.500} className="ml-auto mr-[16px] text-[#777]" /></div>
            <span className="ml-[20px]"><TicketIcon /></span><span className="ml-[10px] whitespace-nowrap pt-[3px] tracking-[-0.020em]">Cargando...</span>
          </div>
          <div className="flex h-[81px] items-center border-b border-[#e5e5e5] pt-[22px]">
            {columns.map(([c, w]) => <div key={c} className={`shrink-0 text-center ${w}`}>{c}</div>)}
          </div>
          <div className="flex flex-col items-center pt-[29px]">
            <User size={41} strokeWidth={2.100} color="#b0d000" />
            <p className="mt-[10px] whitespace-nowrap leading-7 tracking-[-0.011em] text-[#262626]">No hay datos disponibles en este momento</p>
          </div>
        </div>
      </div>
      <div className="absolute bottom-[19px] left-[478px] h-[109px] w-[445px]">
        <div className="absolute left-[22px] right-[22px] top-0 h-[60px] rounded-[10px] border border-[#e8e8e8] bg-white" />
        <div className="absolute inset-x-[11px] top-[16px] h-[65px] rounded-[10px] border border-[#e6e6e6] bg-white" />
        <div className="absolute inset-x-0 bottom-0 flex h-[66px] items-center rounded-[10px] border border-[#ececec] bg-[#fefefe] pl-[17px] text-[15.700px] tracking-[-0.011em] text-[#4d4d4d] shadow-[0_5px_14px_rgba(0,0,0,0.12)]">
          <span className="mr-[11px] grid size-5 place-items-center rounded-full bg-[#333]">
            <svg width="4" height="12" viewBox="0 0 4 12"><path d="M2 .5V7" stroke="#fff" strokeWidth="2" /><circle cx="2" cy="10" r="1.200" fill="#fff" /></svg>
          </span>
          <span className="pt-[3px]">Error al cargar los datos de candidatos</span>
        </div>
      </div>
    </main>
  );
}

/* ---------- windows taskbar ---------- */

function TaskApp({ open, wide, children }) {
  return (
    <div className={`relative grid h-full w-[46px] shrink-0 place-items-center ${wide ? "bg-[#4a4a4a]" : ""}`}>
      {children}
      {open && <i className={`absolute bottom-0 h-[3px] bg-[#76b9ed] ${wide ? "w-full" : "w-[35px]"}`} />}
    </div>
  );
}

function Taskbar() {
  return (
    <footer className={`flex h-[38px] shrink-0 items-center bg-[#1c1c1c] text-white ${segoe}`}>
      <svg width="20" height="20" viewBox="0 0 20 20" fill="#fff" className="ml-3"><path d="M0 2.800L8.300 1.600V9.400H0ZM9.300 1.500L20 0V9.400H9.300ZM0 10.400H8.300V18.300L0 17.200ZM9.300 10.400H20V20L9.300 18.500Z" /></svg>
      <div className="ml-[13px] flex h-full w-[323px] items-center border border-b-0 border-[#5c5c5c] bg-[#333]">
        <svg width="22" height="22" viewBox="0 0 22 22" fill="none" stroke="#e8e8e8" strokeWidth="1.500" className="ml-[13px]"><circle cx="13.500" cy="8" r="6.500" /><path d="M9 13L1.500 20.500" /></svg>
        <span className="ml-[14px] text-[17.500px] tracking-[-0.01em] text-[#dcdcdc]">Buscar</span>
        <svg width="72" height="37" viewBox="0 0 72 37" className="ml-auto">
          <circle cx="54" cy="23" r="8.500" fill="#ffc61a" />
          <path d="M0 37Q6 30 20 31L45 27Q64 25 72 37Z" fill="#8a5aa8" />
          <path d="M14 37Q28 29 50 28L40 37ZM54 37Q56 28 60 28Q70 30 72 37Z" fill="#c9a06a" />
          <path d="M26 37Q34 31 48 28L44 37Z" fill="#a878d8" />
          <g stroke="#6a5a8c" strokeWidth="1.200" fill="none"><path d="M8 32V14M14 31L12 14M21 31V3M27 31L30 15M33 30L41 10" /></g>
          <g stroke="#9a78d0" strokeWidth="3.600" strokeLinecap="round" strokeDasharray="2.500 4"><path d="M6 30V15M13 29L13 16M21 28V4M27 28L30 15M34 27L41 11" /></g>
          <g stroke="#b79be6" strokeWidth="2" strokeLinecap="round" strokeDasharray="1 4.500"><path d="M8 28V14M15 29L12 16M19.500 26V6M29 28L32 17M32 27L39 13" /></g>
        </svg>
      </div>
      <div className="ml-[6px] h-[22px] w-[4px] border-x border-[#5a5a5a]" />
      <div className="ml-[13px] flex h-full">
        <TaskApp open><svg width="22" height="20" viewBox="0 0 22 20"><path d="M4 7L12 0L20 7V17Q20 18 19 18H5Q4 18 4 17Z" fill="#0f5fb4" /><path d="M7 4H18V13H7Z" fill="#3ea8ee" /><path d="M5 19L22 7V17Q22 19 20 19Z" fill="#28b4f0" /><rect y="4" width="13" height="12" rx="1.500" fill="#0f6cbd" /><ellipse cx="6.500" cy="10" rx="2.700" ry="3.200" fill="none" stroke="#fff" strokeWidth="1.700" /></svg></TaskApp>
        <TaskApp><svg width="20" height="20" viewBox="0 0 20 20"><path d="M5 4V1.500H15V4" fill="none" stroke="#35b3f1" strokeWidth="1.700" /><rect x=".5" y="3" width="19" height="16.500" rx="2" fill="#f4f4f4" /><path d="M5.500 6.500H9.500V10.500H5.500Z" fill="#f25022" /><path d="M10.500 6.500H14.500V10.500H10.500Z" fill="#7fba00" /><path d="M5.500 11.500H9.500V15.500H5.500Z" fill="#00a4ef" /><path d="M10.500 11.500H14.500V15.500H10.500Z" fill="#ffb900" /></svg></TaskApp>
        <TaskApp>
          <svg width="19" height="19" viewBox="0 0 19 19">
            <defs>
              <linearGradient id="cpa" x1="0" y1="0" x2="0" y2="1"><stop offset="0" stopColor="#1a8fe0" /><stop offset=".6" stopColor="#35c07d" /><stop offset="1" stopColor="#ffd02e" /></linearGradient>
              <linearGradient id="cpb" x1="0" y1="0" x2="0" y2="1"><stop offset="0" stopColor="#b45cf0" /><stop offset=".5" stopColor="#f0509a" /><stop offset="1" stopColor="#ff8a3c" /></linearGradient>
            </defs>
            <path d="M5 .5H11Q13 .5 13.600 2.500L14.300 5H12Q10 5 9.400 7L7.500 13Q7 15 5 15H2.500Q0 15 .3 12L2.300 3Q3 .5 5 .5Z" fill="url(#cpa)" />
            <path d="M14 4.500H16.500Q19 4.500 18.700 7.500L16.700 16Q16 18.500 14 18.500H8Q6 18.500 5.300 16.500L4.800 14.500H7Q9 14.500 9.600 12.500L11.500 6.500Q12 4.500 14 4.500Z" fill="url(#cpb)" />
            <path d="M9.400 7L7.800 12.300L9.600 12.500L11.300 7Z" fill="#1c1c1c" />
          </svg>
        </TaskApp>
        <TaskApp open><svg width="21" height="20" viewBox="0 0 21 20"><path d="M15 0L20.500 2.500V17.500L15 20L5 11L2 13.500L.5 12.500L4 10L.5 7.500L2 6.500L5 9Z" fill="#2394dc" /><path d="M15 5.500V14.500L9 10Z" fill="#1c1c1c" /></svg></TaskApp>
        <TaskApp open><svg width="20" height="18" viewBox="0 0 20 18"><path d="M1 2Q1 1 2 1H7L9 3H19V17H1Z" fill="#f5b82e" /><path d="M1 5H19V16H1Z" fill="#ffdc6b" /><path d="M4 17V11Q4 9.500 5.500 9.500H14.500Q16 9.500 16 11V17H13V13H7V17Z" fill="#3a92dc" /></svg></TaskApp>
        <TaskApp open wide><Firefox size={21} /></TaskApp>
        <TaskApp open><svg width="18" height="18" viewBox="0 0 18 18"><rect width="18" height="18" rx="4" fill="#050505" /><path d="M9 3L14 6V12L9 15L4 12V6Z" fill="#8d8d8d" /><path d="M4 6L9 8.500L14 6L9 14Z" fill="#e5e5e5" /></svg></TaskApp>
        <TaskApp open><svg width="18" height="18" viewBox="0 0 18 18" fill="none" stroke="#fff"><circle cx="9" cy="9" r="4.700" strokeWidth="2.300" /><circle cx="9" cy="9" r="7" strokeWidth="2.500" strokeDasharray="2.200 3.298" /></svg></TaskApp>
        <TaskApp open><FaWhatsapp size={22} color="#25d366" /></TaskApp>
        <TaskApp open><svg width="18" height="16" viewBox="0 0 18 16"><rect x=".5" y=".5" width="17" height="15" fill="#8fd0f7" stroke="#1b72b8" /><circle cx="5.500" cy="6.500" r="3" fill="#fff" stroke="#1b72b8" /><path d="M5.500 6.500V3.500A3 3 0 0 1 8.500 6.500Z" fill="#f39c12" /><path d="M11 4H15M11 7H15M11 10H15" stroke="#fff" strokeWidth="1.600" /><path d="M3 13H10" stroke="#f39c12" strokeWidth="1.500" /></svg></TaskApp>
      </div>
      <div className="ml-[378px] flex h-[25px] w-[62px] border-[3px] border-white bg-black"><span className="flex w-[45px] items-center bg-[#159947] pl-[10px] text-[16.5px] tracking-[-0.03em]">80%</span></div>
      <span className="h-[10px] w-[2px] bg-white" />
      <svg width="12" height="18" viewBox="0 0 12 18" fill="#fff" className="ml-[8px]"><path d="M2 0H4.500V5H7.500V0H10V5H12V9Q11 12 7.500 12.500V18H4.500V12.500Q1 12 0 9V5H2Z" /></svg>
      <span className="relative ml-[99px] size-[26px] rounded-full bg-gradient-to-br from-[#ffd21f] to-[#e8680a]"><i className="absolute -right-[2px] -top-[3px] grid size-[15px] place-items-center rounded-full bg-[#c42b2b] text-[10px] font-semibold not-italic">2</i></span>
      <span className="ml-[11px] whitespace-nowrap pt-[1px] text-[17px] tracking-[-0.015em]">32°C</span>
      <span className="ml-[11px] w-[64px] whitespace-nowrap pt-[1px] text-[17px]">Soleado</span>
      <svg width="18" height="12" viewBox="0 0 18 12" fill="none" stroke="#fff" strokeWidth="1.400" className="ml-[23px]"><path d="M1.500 10L9 2.500L16.500 10" /></svg>
      <svg width="16" height="20" viewBox="0 0 16 20" fill="none" stroke="#fff" strokeWidth="1.300" className="ml-[14px]"><rect x="1.500" y="5" width="9" height="10" rx="2" /><path d="M10.500 9L14.500 6.500V13.500L10.500 11M2 2.500Q6 0 10 2.500M2 17.500Q6 20 10 17.500" /></svg>
      <svg width="20" height="20" viewBox="0 0 20 20" fill="none" stroke="#fff" strokeWidth="1.200" className="ml-[12px]"><path d="M1 3L19 1V12M10 18L1 17V3M6 9Q7 5.500 11 6.500L12.500 7.500M12.500 4.500V7.500H9.500M12 10Q11 13.500 7.500 12.500L6 11.500M6 14.500V11.500" /><circle cx="15.500" cy="15.500" r="4" fill="#2e75b8" stroke="none" /></svg>
      <svg width="21" height="16" viewBox="0 0 21 16" fill="none" stroke="#fff" strokeWidth="1.300" className="ml-[10px]"><path d="M5 3.500H18.500V13.500H5V7M19.500 7V10M1 2.500H6V5Q5.500 7 3.500 7Q1.500 7 1 5ZM2 0V2.500M5 0V2.500" /><path d="M8 6H14V11H8Z" fill="#fff" /></svg>
      <svg width="18" height="18" viewBox="0 0 18 18" fill="none" stroke="#fff" strokeWidth="1.400" className="ml-[11px]"><path d="M2 16Q3 4 16 2.500M6 16Q7 8 16 6.500M10 16Q11 11.500 16 10.500" /><circle cx="14.500" cy="15" r="1.300" fill="#fff" /></svg>
      <svg width="21" height="18" viewBox="0 0 21 18" fill="none" stroke="#fff" strokeWidth="1.300" className="ml-[10px]"><path d="M1 6.500H4L8 2.500V15.500L4 11.500H1ZM11 6.500Q12.500 9 11 11.500M14 4.500Q17 9 14 13.500M17 2.500Q21 9 17 15.500" /></svg>
      <span className="ml-[14px] text-[14.500px] tracking-[-0.03em]">ESP</span>
      <span className="ml-[20px] text-[14.500px] tracking-[-0.04em]">16:29</span>
      <svg width="20" height="20" viewBox="0 0 20 20" className="ml-auto mr-[25px]"><path d="M0 0H20V16H13L10 20L7 16H0Z" fill="#fff" /><path d="M4 4.500H16M4 8H16M4 11.500H11" stroke="#1c1c1c" strokeWidth="1.300" /></svg>
      <i className="mr-[5px] h-full w-px bg-[#5a5a5a]" />
    </footer>
  );
}

export default function App() {
  return (
    <div className="flex h-[1080px] w-[1920px] flex-col overflow-hidden bg-black">
      <BrowserChrome />
      <div className="flex h-[866px]">
        <FirefoxSidebar />
        <div className={`flex w-[1856px] flex-col bg-black ${plex}`}>
          <WorkspaceHeader />
          <div className="flex min-h-0 flex-1">
            <Rail />
            <ChatPanel />
            <div className="flex h-[796px] w-2 items-center justify-center"><i className="h-[30px] w-0.5 bg-[#4e5369]" /></div>
            <section className="flex h-[796px] w-[1272px] flex-col overflow-hidden rounded-md">
              <PreviewTabs />
              <PreviewToolbar />
              <div className={`flex min-h-0 flex-1 ${segoe}`}>
                <AppSidebar />
                <AppMain />
              </div>
            </section>
          </div>
        </div>
      </div>
      <Taskbar />
    </div>
  );
}
